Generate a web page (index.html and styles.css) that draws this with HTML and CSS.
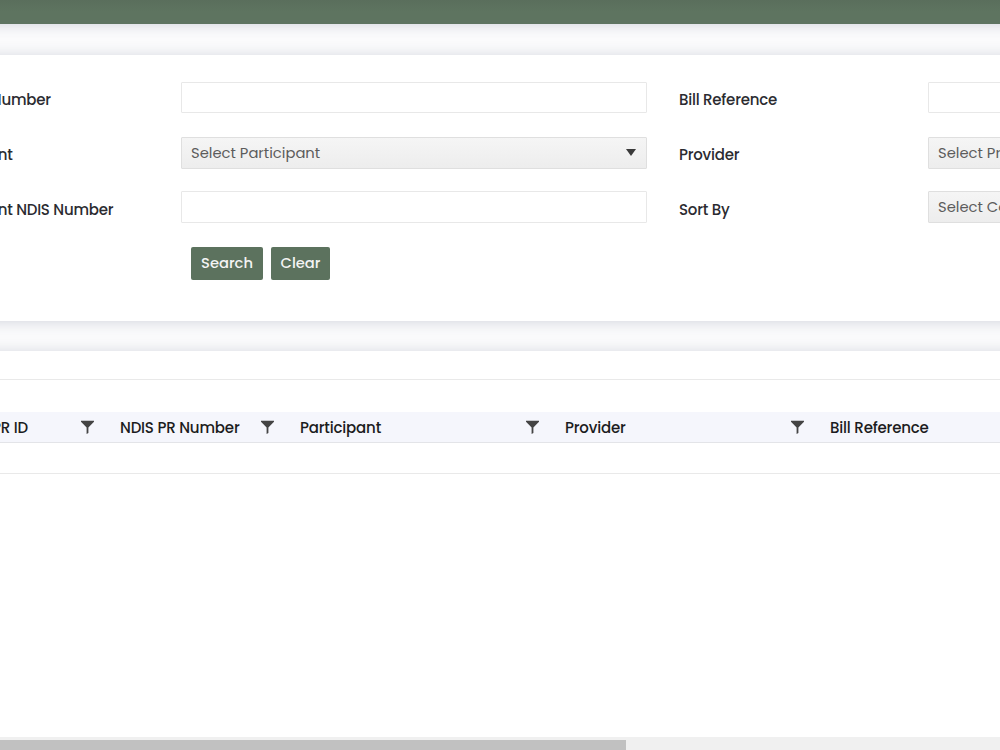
FILE: index.html
```html
<!DOCTYPE html>
<html lang="en">
<head>
    <meta charset="UTF-8">
    <meta name="viewport" content="width=device-width, initial-scale=1.0">
    <title>Payment Requests</title>
    <link rel="stylesheet" href="styles.css">
</head>
<body>
    <svg width="0" height="0" class="sprite">
        <symbol id="filter" viewBox="0 0 13 14">
            <path d="M0 0.7H13V1.8L7.4 7.4V13L5.6 14V7.4L0 1.8Z"/>
        </symbol>
    </svg>

    <div class="top-bar"></div>

    <div class="panel search-panel">
        <div class="form-grid">
            <label class="label">NDIS PR Number</label>
            <div class="field"></div>
            <label class="label">Bill Reference</label>
            <div class="field"></div>

            <label class="label">Participant</label>
            <div class="field select">Select Participant<i class="arrow"></i></div>
            <label class="label">Provider</label>
            <div class="field select">Select Provider<i class="arrow"></i></div>

            <label class="label last">Participant NDIS Number</label>
            <div class="field"></div>
            <label class="label last">Sort By</label>
            <div class="field select">Select Column<i class="arrow"></i></div>
        </div>
        <div class="buttons">
            <button class="btn btn-search">Search</button>
            <button class="btn btn-clear">Clear</button>
        </div>
    </div>

    <div class="panel grid-panel">
        <div class="toolbar"></div>
        <div class="grid-header">
            <div class="col"><span>PR ID</span><svg class="filter"><use href="#filter"/></svg></div>
            <div class="col"><span>NDIS PR Number</span><svg class="filter"><use href="#filter"/></svg></div>
            <div class="col"><span>Participant</span><svg class="filter"><use href="#filter"/></svg></div>
            <div class="col"><span>Provider</span><svg class="filter"><use href="#filter"/></svg></div>
            <div class="col"><span>Bill Reference</span></div>
        </div>
        <div class="grid-row"></div>
    </div>

    <div class="scrollbar"><div class="thumb"></div></div>
</body>
</html>
```
FILE: styles.css
```css
* {
    box-sizing: border-box;
}

body {
    margin: 0;
    height: 750px;
    display: flex;
    flex-direction: column;
    overflow: hidden;
    background-color: #fbfbfc;
    font-family: Poppins, Inter, sans-serif;
    font-size: 15px;
    color: #2b2b30;
}

.sprite {
    position: absolute;
}

.top-bar {
    height: 24px;
    flex: none;
    margin: 0 -30px;
    background: linear-gradient(#5a6e5c, #5e7460 50%);
    box-shadow: 0 1px 14px rgba(50, 65, 95, 0.2);
}

.panel {
    margin: 0 -30px;
    padding: 0 30px;
    background-color: #fff;
    box-shadow: 0 1px 14px rgba(50, 65, 95, 0.2);
}

.search-panel {
    margin-top: 31px;
    height: 266px;
    flex: none;
    padding-top: 27px;
}

/* form is wider than the window and scrolled to the right */
.form-grid {
    display: grid;
    grid-template-columns: 249px 466px 281px 466px;
    grid-template-rows: 32px 31px 32px;
    row-gap: 23px;
    margin-left: -68px;
}

.label {
    font-weight: 500;
    white-space: nowrap;
    line-height: 35px;
    letter-spacing: -0.23px;
}

.label.last {
    line-height: 37px;
}

.label:nth-of-type(even) {
    padding-left: 32px;
}

.field {
    height: 31px;
    border: 1px solid #e8e8e8;
    border-radius: 1px;
    background-color: #fff;
}

.form-grid .field:nth-child(n+5) {
    height: 32px;
}

.select {
    display: flex;
    align-items: center;
    justify-content: space-between;
    padding: 0 10px 0 9px;
    border-color: #dfdfdf;
    background: linear-gradient(#f5f5f5, #ededed);
    color: #5c5c5c;
    font-size: 14.75px;
}

.arrow {
    width: 0;
    height: 0;
    margin-top: -2px;
    border: 5px solid transparent;
    border-top: 7px solid #3a3a3a;
    border-bottom: 0;
}

.buttons {
    display: flex;
    gap: 8px;
    padding: 24px 0 0 191px;
}

.btn {
    height: 33px;
    padding: 0;
    border: 0;
    border-radius: 2px;
    background-color: #5c725e;
    color: #f4f4f4;
    font: 500 14.7px Poppins, Inter, sans-serif;
}

.btn-search {
    width: 72px;
}

.btn-clear {
    width: 59px;
}

.grid-panel {
    margin-top: 30px;
    flex: 1;
}

.toolbar {
    height: 29px;
    margin: 0 -30px;
    border-bottom: 1px solid #e9e9e9;
}

.grid-header {
    display: grid;
    grid-template-columns: 110px 180px 265px 265px 265px;
    height: 31px;
    margin-top: 32px;
    margin-left: -10px;
    border-bottom: 1px solid #e3e4e8;
    background-color: #f5f6fc;
    color: #1c1c20;
    font-weight: 500;
}

.col {
    display: flex;
    align-items: center;
    justify-content: space-between;
    padding: 0 6px 0 20px;
    white-space: nowrap;
    letter-spacing: -0.18px;
}

.col:first-child {
    padding-left: 2px;
}

.filter {
    width: 13px;
    height: 14px;
    fill: #444;
}

.grid-row {
    height: 31px;
    margin: 0 -30px;
    border-bottom: 1px solid #e9e9e9;
}

.scrollbar {
    height: 13px;
    flex: none;
    padding-top: 3px;
    background-color: #f0f0f0;
    position: relative;
}

.thumb {
    width: 626px;
    height: 10px;
    background-color: #c1c1c1;
}
```
